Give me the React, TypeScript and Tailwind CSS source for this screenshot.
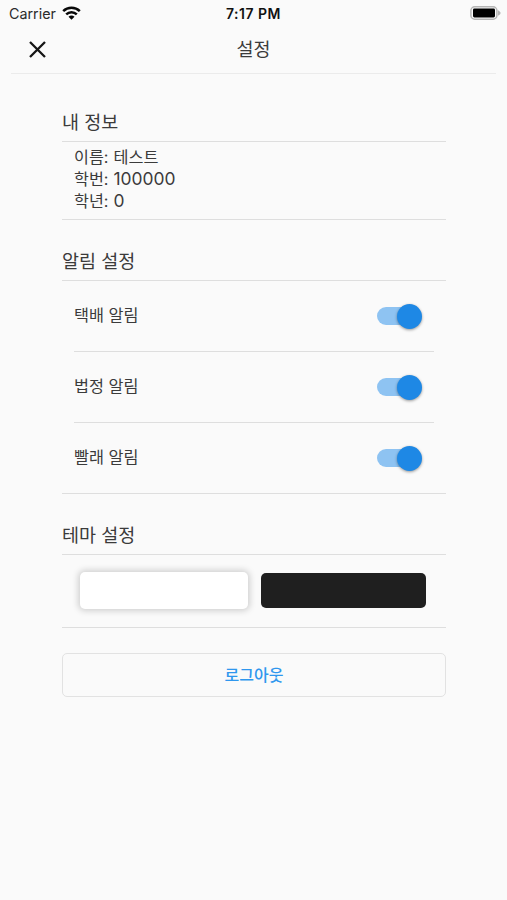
import { ReactNode } from "react";

function StatusBar() {
  return (
    <div className="flex h-[27px] items-center justify-between pl-[9px] pr-[6px] text-[#111]">
      <div className="flex w-[150px] items-center gap-[6px]">
        <span className="text-[14.3px] leading-[27px] text-[#2b2b2b]">Carrier</span>
        <svg className="-mt-[2px]" width="19" height="14" viewBox="0 0 19 14" fill="none" stroke="#080808" strokeWidth="2.5">
          <path d="M1.2 5.1C5.8.6 13.2.6 17.8 5.1" />
          <path d="M4.2 8.3C7.2 5.4 11.8 5.4 14.8 8.3" />
          <path d="M9.5 13.8 6.5 10.7C8.2 9.2 10.8 9.2 12.5 10.7Z" fill="#080808" stroke="none" />
        </svg>
      </div>
      <span className="mr-[3px] text-[14px] font-semibold leading-[27px] tracking-[0.5px]">7:17 PM</span>
      <div className="flex w-[150px] justify-end">
        <svg className="-mt-px" width="31" height="14" viewBox="0 0 31 14">
          <rect x="0.9" y="0.8" width="26" height="12.4" rx="3.8" fill="#fafafa" stroke="#b5b5b5" strokeWidth="1.5" />
          <rect x="3" y="2.6" width="22" height="8.8" rx="1.4" fill="#000" />
          <path d="M28 4.2C31.4 6 31.4 8 28 9.8Z" fill="#b5b5b5" />
        </svg>
      </div>
    </div>
  );
}

function Header() {
  return (
    <header className="mx-[11px] grid h-[47px] grid-cols-3 items-center border-b border-[#ebebeb] pb-[2px]">
      <button className="ml-[18px] flex w-[17px]" aria-label="닫기">
        <svg width="17" height="17" viewBox="0 0 17 17" stroke="#151515" strokeWidth="2.3">
          <path d="M1 1 16 16M16 1 1 16" />
        </svg>
      </button>
      <h1 className="text-center text-[18.5px] leading-[26px]">설정</h1>
    </header>
  );
}

function Section({ title, children }: { title: string; children: ReactNode }) {
  return (
    <section>
      <h2 className="h-[33px] text-[18.5px] leading-[28px]">{title}</h2>
      <div className="border-y-[1.5px] border-[#dedede]">{children}</div>
    </section>
  );
}

function Toggle() {
  return (
    <button role="switch" aria-checked="true" className="flex h-[18px] w-[42px] items-center justify-end rounded-full bg-[#8ec3f2]">
      <span className="-mr-[3px] size-[25px] shrink-0 rounded-full bg-[#1e88e5] shadow-[0_1px_3px_rgba(0,0,0,0.4)]" />
    </button>
  );
}

const profile = [
  { label: "이름", value: "테스트", valueClass: "text-[16.3px]" },
  { label: "학번", value: "100000", valueClass: "text-[17.4px]" },
  { label: "학년", value: "0", valueClass: "text-[17.4px]" },
];

const alerts = ["택배 알림", "법정 알림", "빨래 알림"];

export default function App() {
  return (
    <div className="h-[900px] w-[507px] bg-[#fafafa] font-['Inter','Noto_Sans_CJK_KR',sans-serif] text-[#3b3b3b]">
      <StatusBar />
      <Header />
      <main className="flex flex-col pl-[62px] pr-[61px] pt-[34px]">
        <Section title="내 정보">
          <dl className="h-[77px] pl-3 pt-1">
            {profile.map(({ label, value, valueClass }) => (
              <div key={label} className="flex h-[22px] gap-[5px] text-[16.2px] leading-[22px]">
                <dt>{label}:</dt>
                <dd className={valueClass}>{value}</dd>
              </div>
            ))}
          </dl>
        </Section>
        <div className="h-[27px]" />
        <Section title="알림 설정">
          <ul className="px-3">
            {alerts.map((name, index) => (
              <li
                key={name}
                className={`flex items-center justify-between pr-[15px] text-[16.3px] ${
                  index < alerts.length - 1 ? "h-[71px] border-b border-[#dedede]" : "h-[70px]"
                }`}
              >
                <span className="-mt-[3px] leading-[24px]">{name}</span>
                <Toggle />
              </li>
            ))}
          </ul>
        </Section>
        <div className="h-[27px]" />
        <Section title="테마 설정">
          <div className="flex h-[72px] items-center gap-[13px] pb-px pl-[18px] pr-5">
            <button aria-label="밝은 테마" className="h-[37px] w-[168px] rounded-[5px] bg-white shadow-[0_0_6px_2px_rgba(0,0,0,0.17)]" />
            <button aria-label="어두운 테마" className="h-[35px] flex-1 rounded-[5px] bg-[#1f1f1f]" />
          </div>
        </Section>
        <button className="mt-[25px] h-[44px] rounded-[5px] border-[1.5px] border-[#e2e2e2] text-[16px] font-medium text-[#2f97ee]">
          로그아웃
        </button>
      </main>
    </div>
  );
}
